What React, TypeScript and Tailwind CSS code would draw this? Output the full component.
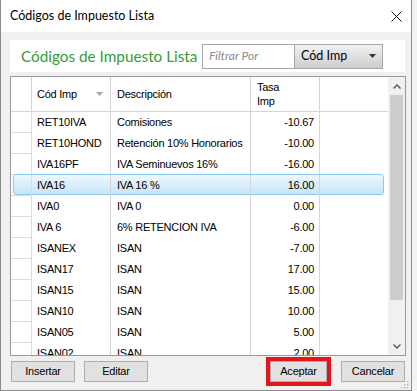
import React from 'react';

const ROWS = [
  { code: 'RET10IVA', desc: 'Comisiones', rate: '-10.67' },
  { code: 'RET10HOND', desc: 'Retención 10% Honorarios', rate: '-10.00' },
  { code: 'IVA16PF', desc: 'IVA Seminuevos 16%', rate: '-16.00' },
  { code: 'IVA16', desc: 'IVA 16 %', rate: '16.00', selected: true },
  { code: 'IVA0', desc: 'IVA 0', rate: '0.00' },
  { code: 'IVA 6', desc: '6% RETENCION IVA', rate: '-6.00' },
  { code: 'ISANEX', desc: 'ISAN', rate: '-7.00' },
  { code: 'ISAN17', desc: 'ISAN', rate: '17.00' },
  { code: 'ISAN15', desc: 'ISAN', rate: '15.00' },
  { code: 'ISAN10', desc: 'ISAN', rate: '10.00' },
  { code: 'ISAN05', desc: 'ISAN', rate: '5.00' },
  { code: 'ISAN02', desc: 'ISAN', rate: '2.00' },
];

const sans = "font-['Liberation_Sans',Arial,sans-serif]";
const ui = "font-['Lato','Noto_Sans',sans-serif]";

function WinButton({ label, className = '' }: { label: string; className?: string }) {
  return (
    <button className={`h-[21px] bg-[#e1e1e1] border border-[#adadad] text-[11px] tracking-[-0.2px] text-black leading-none ${sans} ${className}`}>
      {label}
    </button>
  );
}

export default function App() {
  return (
    <div className="w-[417px] h-[391px] bg-[#f3f3f3] overflow-hidden">
      <div className="w-[412px] h-[391px] flex flex-col border-l border-r border-b border-[#8c8c8c] bg-[#f0f0f0]">
        {/* Title bar */}
        <div className="h-[32px] shrink-0 bg-white flex items-center justify-between pl-[9px] pr-[8px]">
          <span className={`text-[12.5px] text-black whitespace-nowrap ${ui}`}>Códigos de Impuesto Lista</span>
          <svg width="11" height="11" viewBox="0 0 11 11" className="mr-[1px]">
            <path d="M0.5 0.5 L10.5 10.5 M10.5 0.5 L0.5 10.5" stroke="#111" strokeWidth="1" />
          </svg>
        </div>

        <div className="flex-1 flex flex-col pt-[8px] pl-[9px] pr-[6px]">
          {/* Header panel */}
          <div className="h-[32px] bg-white flex items-center pl-[11px] pr-[22px]">
            <span className={`text-[15.3px] text-[#349c3c] whitespace-nowrap ${ui}`}>Códigos de Impuesto Lista</span>
            <div className="ml-auto flex h-[25px] shrink-0">
              <div className="w-[93px] border border-[#a8a8a8] bg-white flex items-center pl-[6px]">
                <span className={`text-[12px] italic text-[#8a8a8a] ${ui}`}>Filtrar Por</span>
              </div>
              <div className="w-[88px] border border-l-0 border-[#a8a8a8] bg-gradient-to-b from-[#f2f2f2] to-[#cdcdcd] flex items-center justify-between pl-[6px] pr-[6px]">
                <span className={`text-[12.5px] text-black ${ui}`}>Cód Imp</span>
                <svg width="7" height="4" viewBox="0 0 7 4">
                  <path d="M0 0 H7 L3.5 4 Z" fill="#333" />
                </svg>
              </div>
            </div>
          </div>

          {/* Grid */}
          <div className={`mt-[4px] h-[280px] w-[396px] border border-[#9a9a9a] bg-white flex ${sans} text-[11px] tracking-[-0.25px] text-black`}>
            <div className="flex-1 flex flex-col overflow-hidden">
              {/* Column headers */}
              <div className="h-[35px] shrink-0 flex border-b border-[#d5d5d5]">
                <div className="w-[21px] border-r border-[#d5d5d5]" />
                <div className="w-[79px] border-r border-[#d5d5d5] flex items-center justify-between pl-[5px] pr-[7px]">
                  <span>Cód Imp</span>
                  <svg width="7" height="4" viewBox="0 0 7 4">
                    <path d="M0 0 H7 L3.5 4 Z" fill="#a9a9a9" />
                  </svg>
                </div>
                <div className="w-[140px] border-r border-[#d5d5d5] flex items-center pl-[6px]">Descripción</div>
                <div className="w-[69px] border-r border-[#d5d5d5] flex flex-col justify-center pl-[6px] leading-[14px]">
                  <span>Tasa</span>
                  <span>Imp</span>
                </div>
                <div className="flex-1" />
              </div>

              {/* Rows */}
              <div className="flex-1 overflow-hidden">
                {ROWS.map((r) => (
                  <div key={r.code} className="relative h-[21px] flex">
                    {r.selected && (
                      <div className="absolute left-[2px] right-[4px] top-[-1px] bottom-[1px] rounded-[3px] border border-[#8ccbf0] bg-gradient-to-b from-[#eef8fe] to-[#c6e5f8]" />
                    )}
                    <div className="relative w-[21px] border-r border-b border-[#dcdcdc]" />
                    <div className="relative w-[79px] border-r border-[#d5d5d5] flex items-center pl-[5px] whitespace-nowrap">{r.code}</div>
                    <div className="relative w-[140px] border-r border-[#d5d5d5] flex items-center pl-[6px] whitespace-nowrap overflow-hidden">{r.desc}</div>
                    <div className="relative w-[69px] border-r border-[#d5d5d5] flex items-center justify-end pr-[5px]">{r.rate}</div>
                    <div className="flex-1" />
                  </div>
                ))}
              </div>
            </div>

            {/* Scrollbar */}
            <div className="w-[17px] bg-[#f0f0f0] flex flex-col">
              <div className="h-[18px] flex items-center justify-center">
                <svg width="8" height="5" viewBox="0 0 8 5">
                  <path d="M0.5 4.5 L4 1 L7.5 4.5" fill="none" stroke="#606060" strokeWidth="1.5" />
                </svg>
              </div>
              <div className="flex-1 flex flex-col px-[2px]">
                <div className="h-[205px] bg-[#cdcdcd]" />
              </div>
              <div className="h-[18px] flex items-center justify-center">
                <svg width="8" height="5" viewBox="0 0 8 5">
                  <path d="M0.5 0.5 L4 4 L7.5 0.5" fill="none" stroke="#606060" strokeWidth="1.5" />
                </svg>
              </div>
            </div>
          </div>

          {/* Buttons */}
          <div className="mt-[5px] flex items-center">
            <WinButton label="Insertar" className="w-[64px] ml-[1px]" />
            <WinButton label="Editar" className="w-[64px] ml-[9px]" />
            <WinButton label="Aceptar" className="w-[57px] ml-auto outline-[4px] outline-solid outline-[#e3151f] outline-offset-[0px]" />
            <WinButton label="Cancelar" className="w-[64px] ml-[14px]" />
          </div>
        </div>

        {/* Resize grip */}
        <div className="relative h-0">
          <svg width="8" height="8" viewBox="0 0 8 8" className="absolute right-[2px] bottom-[1px]">
            {[[6, 0], [6, 3], [3, 3], [6, 6], [3, 6], [0, 6]].map(([x, y], i) => (
              <rect key={i} x={x} y={y} width="1.5" height="1.5" fill="#b8b8b8" />
            ))}
          </svg>
        </div>
      </div>
    </div>
  );
}
